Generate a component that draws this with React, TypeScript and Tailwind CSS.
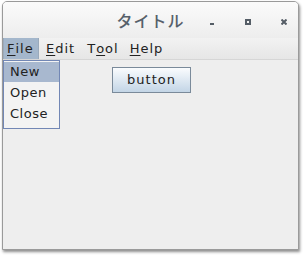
import React from "react";

const menuFont = { fontFamily: '"DejaVu Sans", sans-serif' };

function MenuLabel({
  children,
  active,
  className = "",
}: {
  children: React.ReactNode;
  active?: boolean;
  className?: string;
}) {
  return (
    <div
      className={`flex h-full items-center px-[3px] text-[13px] tracking-[1px] text-[#222] ${
        active ? "w-[36px] bg-[#a4b7cc] border-x border-[#9aaabb]" : ""
      } ${className}`}
      style={menuFont}
    >
      {children}
    </div>
  );
}

export default function App() {
  return (
    <div className="relative h-[255px] w-[303px] bg-white">
      {/* window */}
      <div className="absolute left-[2px] top-[1px] flex h-[249px] w-[297px] flex-col overflow-hidden rounded-t-[5px] border border-[#9a9a9a] bg-[#eeeeee] shadow-[1px_2px_3px_rgba(0,0,0,0.45)]">
        {/* title bar */}
        <div className="relative flex h-[36px] shrink-0 items-center justify-center bg-gradient-to-b from-[#fbfbfb] to-[#ededed]">
          <span
            className="text-[16px] font-medium tracking-[1px] text-[#56606a]"
            style={{ fontFamily: '"Noto Sans CJK JP", sans-serif' }}
          >
            タイトル
          </span>
          <div className="absolute left-[207px] top-[21px] h-[2px] w-[4px] bg-[#555d66]" />
          <div className="absolute left-[242px] top-[17px] h-[6px] w-[6px] border-2 border-[#555d66]" />
          <svg className="absolute left-[278px] top-[17px]" width="6" height="6" viewBox="0 0 6 6">
            <path d="M0.5 0.5 L5.5 5.5 M5.5 0.5 L0.5 5.5" stroke="#555d66" strokeWidth="2" />
          </svg>
        </div>
        {/* menu bar */}
        <div className="flex h-[22px] shrink-0 items-stretch border-b border-[#d6d6d6] bg-gradient-to-b from-[#f2f2f2] to-[#e6e6e6]">
          <MenuLabel active>
            <span className="underline underline-offset-2">F</span>ile
          </MenuLabel>
          <MenuLabel className="ml-[4px]">
            <span className="underline underline-offset-2">E</span>dit
          </MenuLabel>
          <MenuLabel className="ml-[6px]">
            T<span className="underline underline-offset-2">o</span>ol
          </MenuLabel>
          <MenuLabel className="ml-[5px]">
            <span className="underline underline-offset-2">H</span>elp
          </MenuLabel>
        </div>
        {/* content */}
        <div className="flex flex-1 justify-center pt-[7px]">
          <button
            className="ml-[2px] h-[26px] w-[79px] border border-[#7a8a9a] bg-gradient-to-b from-[#fafcfe] to-[#c3d5e6] text-[13px] tracking-[1px] text-[#222]"
            style={menuFont}
          >
            button
          </button>
        </div>
      </div>
      {/* popup menu */}
      <div
        className="absolute left-[3px] top-[60px] flex w-[57px] flex-col border border-[#7287b5] bg-[#f3f3f3] py-[1px] text-[13px] tracking-[0.5px] text-[#222]"
        style={menuFont}
      >
        <div className="flex h-[20px] items-center bg-[#a8b8cf] px-[6px]">New</div>
        <div className="flex h-[21px] items-center px-[6px]">Open</div>
        <div className="flex h-[21px] items-center px-[6px]">Close</div>
        <div className="h-[3px]" />
      </div>
    </div>
  );
}
